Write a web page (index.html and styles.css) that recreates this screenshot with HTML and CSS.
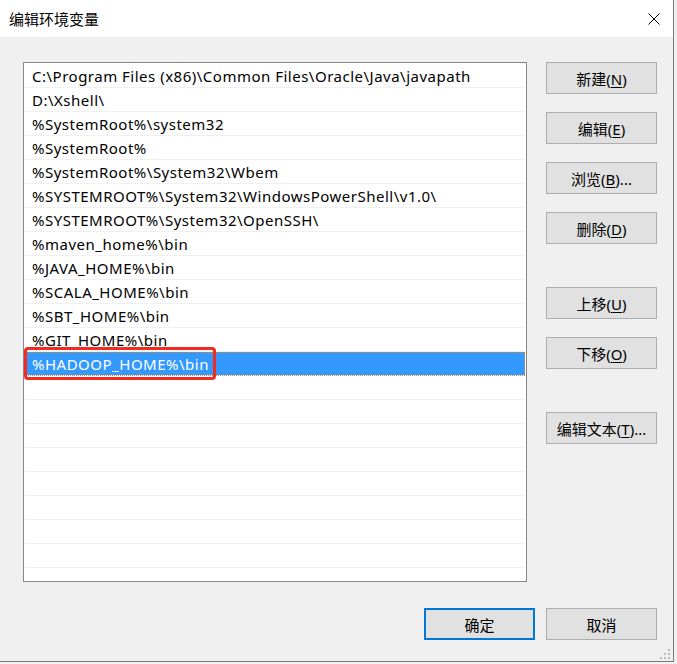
FILE: index.html
```html
<!DOCTYPE html>
<html lang="zh-CN">
<head>
  <meta charset="UTF-8" />
  <title>编辑环境变量</title>
  <link rel="stylesheet" href="styles.css">
</head>
<body>
  <div class="window">
    <div class="titlebar">
      <span class="title">编辑环境变量</span>
      <svg class="close" width="12" height="12" viewBox="0 0 12 12">
        <path d="M0.5 0.5 L11.5 11.5 M11.5 0.5 L0.5 11.5" stroke="#000" stroke-width="1" fill="none"/>
      </svg>
    </div>

    <div class="content">
      <div class="main">
        <div class="list">
          <div class="row">C:\Program Files (x86)\Common Files\Oracle\Java\javapath</div>
          <div class="row">D:\Xshell\</div>
          <div class="row">%SystemRoot%\system32</div>
          <div class="row">%SystemRoot%</div>
          <div class="row">%SystemRoot%\System32\Wbem</div>
          <div class="row">%SYSTEMROOT%\System32\WindowsPowerShell\v1.0\</div>
          <div class="row">%SYSTEMROOT%\System32\OpenSSH\</div>
          <div class="row">%maven_home%\bin</div>
          <div class="row">%JAVA_HOME%\bin</div>
          <div class="row">%SCALA_HOME%\bin</div>
          <div class="row">%SBT_HOME%\bin</div>
          <div class="row">%GIT_HOME%\bin</div>
          <div class="row selected">%HADOOP_HOME%\bin</div>
          <div class="row"></div>
          <div class="row"></div>
          <div class="row"></div>
          <div class="row"></div>
          <div class="row"></div>
          <div class="row"></div>
          <div class="row"></div>
          <div class="row"></div>
          <div class="row"></div>
          <div class="highlight"></div>
        </div>

        <div class="side">
          <div class="group">
            <button class="btn">新建(<u>N</u>)</button>
            <button class="btn">编辑(<u>E</u>)</button>
            <button class="btn">浏览(<u>B</u>)...</button>
            <button class="btn">删除(<u>D</u>)</button>
          </div>
          <div class="group">
            <button class="btn">上移(<u>U</u>)</button>
            <button class="btn">下移(<u>O</u>)</button>
          </div>
          <div class="group">
            <button class="btn">编辑文本(<u>T</u>)...</button>
          </div>
        </div>
      </div>

      <div class="footer">
        <button class="btn default">确定</button>
        <button class="btn">取消</button>
      </div>
    </div>

    <div class="grip">
      <i></i><i></i><i></i>
      <i></i><i></i><i></i>
    </div>
  </div>
</body>
</html>
```

FILE: styles.css
```css
body {
  margin: 0;
  background: #f0f0f0;
  font-family: 'Noto Sans', 'Noto Sans CJK SC', sans-serif;
  color: #000;
}
.window {
  position: relative;
  width: 673px;
  height: 661px;
  background: #f0f0f0;
  border-right: 1px solid #7a7a7a;
  border-bottom: 1px solid #7a7a7a;
}
.titlebar {
  height: 37px;
  background: #fff;
  display: flex;
  align-items: center;
  justify-content: space-between;
  padding: 0 13px 0 9px;
}
.title {
  font-size: 15px;
  font-family: 'Noto Sans CJK SC', sans-serif;
}
.close {
  display: block;
}
.content {
  padding: 25px 16px 0 23px;
}
.main {
  display: flex;
  justify-content: space-between;
}
/* list box */
.list {
  position: relative;
  width: 502px;
  height: 517px;
  padding: 1px 0 0 0;
  border: 1px solid #828790;
  background: #fff;
  overflow: hidden;
}
.row {
  height: 23px;
  margin: 0 1px;
  border-bottom: 1px solid #f0f0f0;
  padding-left: 7px;
  font-size: 15px;
  letter-spacing: 0.5px;
  line-height: 24px;
  white-space: nowrap;
}
.row.selected {
  background: #3399ff;
  color: #fff;
  border-bottom-color: #fff;
  outline: 1px dotted #e08a1e;
  outline-offset: -1px;
}
.highlight {
  position: absolute;
  left: 0;
  top: 284px;
  width: 186px;
  height: 27px;
  border: 3px solid #f52a1f;
  border-radius: 4px;
}
/* buttons */
.side {
  display: flex;
  flex-direction: column;
  gap: 43px;
}
.group {
  display: flex;
  flex-direction: column;
  gap: 18px;
}
.btn {
  width: 111px;
  height: 32px;
  background: #e1e1e1;
  border: 1px solid #adadad;
  font-family: 'Noto Sans', 'Noto Sans CJK SC', sans-serif;
  font-size: 15px;
  color: #000;
  padding: 0;
}
.btn u {
  text-underline-offset: 2px;
}
.btn.default {
  border: 2px solid #0078d7;
}
.footer {
  display: flex;
  justify-content: flex-end;
  gap: 11px;
  margin-top: 26px;
}
/* size grip */
.grip {
  position: absolute;
  right: 3px;
  bottom: 2px;
  display: grid;
  grid-template-columns: repeat(3, 2px);
  grid-template-rows: repeat(3, 2px);
  gap: 2px;
}
.grip i {
  background: #bcbcbc;
}
.grip i:nth-child(1) { grid-area: 1 / 3; }
.grip i:nth-child(2) { grid-area: 2 / 2; }
.grip i:nth-child(3) { grid-area: 2 / 3; }
.grip i:nth-child(4) { grid-area: 3 / 1; }
.grip i:nth-child(5) { grid-area: 3 / 2; }
.grip i:nth-child(6) { grid-area: 3 / 3; }
```
